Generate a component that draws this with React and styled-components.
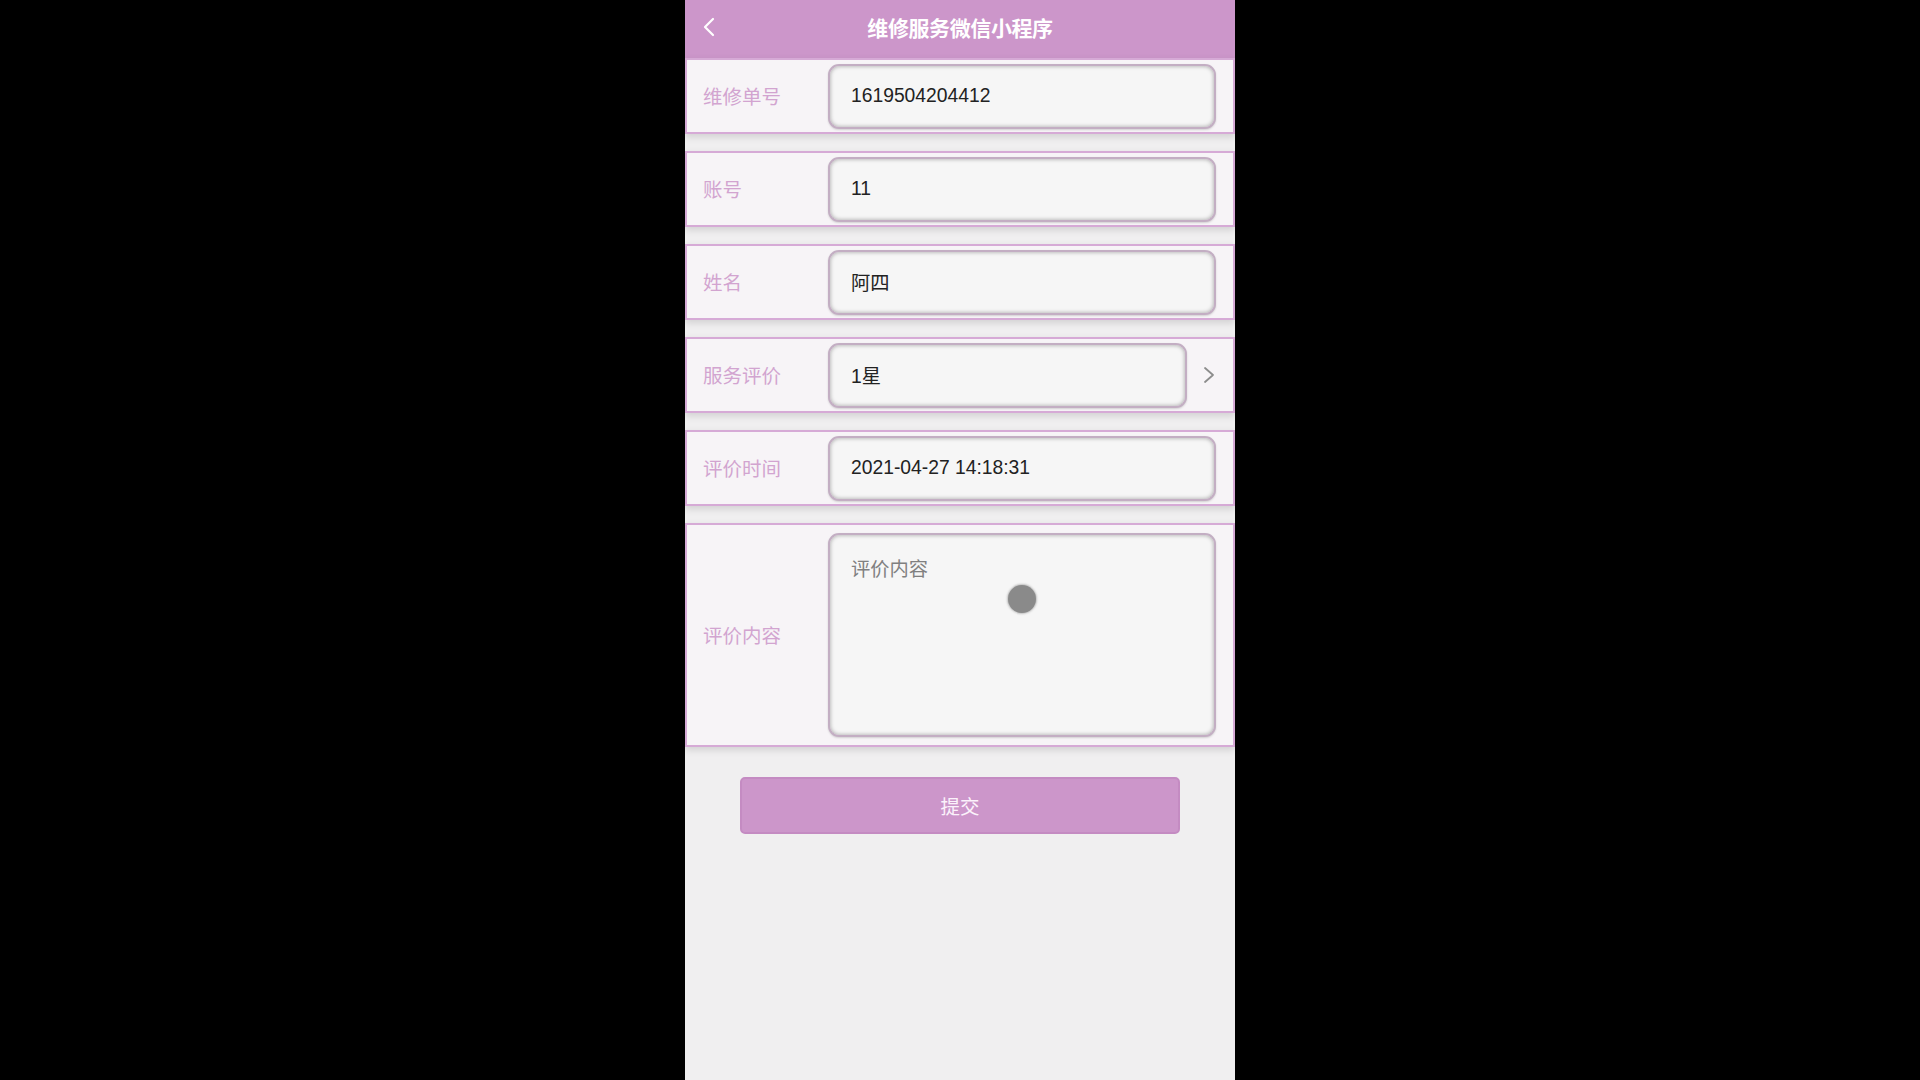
import React from "react";
import styled, { createGlobalStyle } from "styled-components";

const Global = createGlobalStyle`
  html, body { margin: 0; padding: 0; background: #000; }
  body { font-family: "Liberation Sans", "Noto Sans CJK SC", sans-serif; }
  * { box-sizing: border-box; }
`;

const Screen = styled.div`
  width: 550px;
  height: 1080px;
  margin: 0 auto;
  background: #f0eff0;
  display: flex;
  flex-direction: column;
  overflow: hidden;
`;

const Header = styled.header`
  height: 58px;
  padding-bottom: 4px;
  background: #cc96ca;
  display: flex;
  align-items: center;
  flex-shrink: 0;
`;

const BackButton = styled.div`
  width: 60px;
  padding-left: 17px;
  display: flex;
  align-items: center;
`;

const Title = styled.h1`
  flex: 1;
  margin: 0 60px 0 0;
  text-align: center;
  font-size: 21px;
  font-weight: bold;
  color: #fff;
  letter-spacing: -0.4px;
  font-family: "Noto Sans CJK SC", sans-serif;
`;

const Form = styled.div`
  display: flex;
  flex-direction: column;
  gap: 17px;
`;

const Row = styled.div`
  display: flex;
  align-items: center;
  height: ${(p) => p.$h || 76}px;
  background: #f7f4f7;
  border: 2px solid #d6aad6;
  padding: 0 17px 0 16px;
  box-shadow: 0 3px 7px rgba(0, 0, 0, 0.13);
`;

const Label = styled.div`
  width: 125px;
  flex-shrink: 0;
  margin-top: -2px;
  font-size: 19.5px;
  color: #d2a4d0;
  font-family: "Noto Sans CJK SC", sans-serif;
`;

const Field = styled.div`
  flex: 1;
  height: ${(p) => p.$h || 65}px;
  background: #f6f6f6;
  border: 2px solid #c3aec3;
  border-radius: 11px;
  box-shadow: inset 0 0 4px rgba(0, 0, 0, 0.35), 0 1px 2px rgba(0, 0, 0, 0.15);
  display: flex;
  align-items: ${(p) => (p.$area ? "flex-start" : "center")};
  padding: ${(p) => (p.$area ? "19px 21px" : "0 21px")};
  font-size: 19.3px;
  color: #222;
  font-family: "Liberation Sans", "Noto Sans CJK SC", sans-serif;
  position: relative;
`;

const Placeholder = styled.span`
  color: #808080;
  font-family: "Noto Sans CJK SC", sans-serif;
  font-size: 19.3px;
`;

const Arrow = styled.div`
  width: 29px;
  display: flex;
  justify-content: flex-end;
  padding-right: 1px;
`;

const TouchDot = styled.div`
  position: absolute;
  left: 178px;
  top: 50px;
  width: 28px;
  height: 28px;
  border-radius: 50%;
  background: #8a8a8a;
  box-shadow: 0 0 2px 1px rgba(120, 120, 120, 0.45);
`;

const SubmitWrap = styled.div`
  display: flex;
  justify-content: center;
  padding-top: 30px;
`;

const Submit = styled.button`
  width: 440px;
  height: 57px;
  background: #cc96ca;
  border: 2px solid #c48bc2;
  border-radius: 5px;
  color: #fbf2fb;
  font-size: 19.5px;
  font-family: "Noto Sans CJK SC", sans-serif;
  cursor: pointer;
`;

const fields = [
  { label: "维修单号", value: "1619504204412" },
  { label: "账号", value: "11" },
  { label: "姓名", value: "阿四" },
  { label: "服务评价", value: "1星", select: true },
  { label: "评价时间", value: "2021-04-27 14:18:31" },
];

export default function App() {
  return (
    <>
      <Global />
      <Screen>
        <Header>
          <BackButton>
            <svg width="14" height="20" viewBox="0 0 14 20">
              <path d="M11 2 L3 10 L11 18" fill="none" stroke="#fff" strokeWidth="2.2" strokeLinecap="round" strokeLinejoin="round" />
            </svg>
          </BackButton>
          <Title>维修服务微信小程序</Title>
        </Header>
        <Form>
          {fields.map((f) => (
            <Row key={f.label}>
              <Label>{f.label}</Label>
              <Field>{f.value}</Field>
              {f.select && (
                <Arrow>
                  <svg width="12" height="18" viewBox="0 0 12 18">
                    <path d="M2 2 L10 9 L2 16" fill="none" stroke="#8c8c8c" strokeWidth="1.8" strokeLinecap="round" strokeLinejoin="round" />
                  </svg>
                </Arrow>
              )}
            </Row>
          ))}
          <Row $h={224}>
            <Label>评价内容</Label>
            <Field $h={204} $area>
              <Placeholder>评价内容</Placeholder>
              <TouchDot />
            </Field>
          </Row>
        </Form>
        <SubmitWrap>
          <Submit>提交</Submit>
        </SubmitWrap>
      </Screen>
    </>
  );
}
